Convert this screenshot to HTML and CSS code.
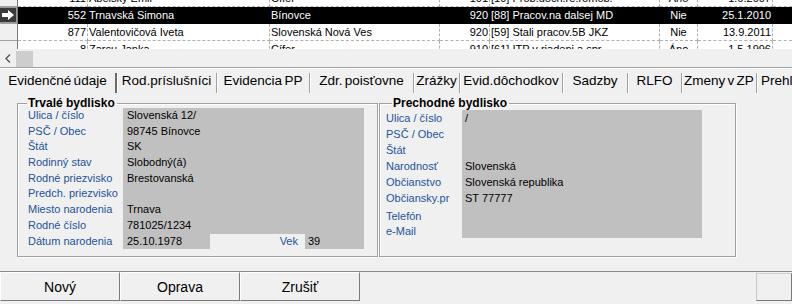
FILE: index.html
```html
<!DOCTYPE html>
<html>

<head>
  <title>Zamestnanci</title>
  <link rel="stylesheet" href="styles.css">
</head>

<body>
  <div class="grid">
    <div class="grid-rows">
      <div class="row row-cut">
        <span class="ind"></span><span class="c num">111</span><span class="c">Ábelský Emil</span><span class="c">Cífer</span><span class="c num">101</span><span class="c">[10] Prob.dôch.re.romob.</span><span class="c mid">Áno</span><span class="c num">1.6.2007</span><span class="c fill"></span>
      </div>
      <div class="row sel">
        <span class="ind on"><svg width="16" height="14" viewBox="0 0 16 14"><path d="M2 5h6V2l6 5-6 5V9H2z" fill="#fff"/></svg></span><span class="c num">552</span><span class="c">Trnavská Simona</span><span class="c">Bínovce</span><span class="c num">920</span><span class="c">[88] Pracov.na dalsej MD</span><span class="c mid">Nie</span><span class="c num">25.1.2010</span><span class="c fill"></span>
      </div>
      <div class="row">
        <span class="ind"></span><span class="c num">877</span><span class="c">Valentovičová Iveta</span><span class="c">Slovenská Nová Ves</span><span class="c num">920</span><span class="c">[59] Stali pracov.5B JKZ</span><span class="c mid">Nie</span><span class="c num">13.9.2011</span><span class="c fill"></span>
      </div>
      <div class="row">
        <span class="ind"></span><span class="c num">8</span><span class="c">Zarcu Janka</span><span class="c">Cífer</span><span class="c num">910</span><span class="c">[61] ITP v riadeni a spr.</span><span class="c mid">Áno</span><span class="c num">1.5.1996</span><span class="c fill"></span>
      </div>
    </div>
    <div class="hscroll">
      <span class="sb-btn"><svg width="6" height="9" viewBox="0 0 6 9"><polyline points="5,0.5 1,4.5 5,8.5" fill="none" stroke="#555" stroke-width="1.4"/></svg></span>
      <span class="sb-thumb"></span>
    </div>
  </div>

  <div class="tabs">
    <div class="tab active">Evidenčné údaje</div>
    <div class="tab">Rod.príslušníci</div>
    <div class="tab">Evidencia PP</div>
    <div class="tab">Zdr. poisťovne</div>
    <div class="tab">Zrážky</div>
    <div class="tab">Evid.dôchodkov</div>
    <div class="tab">Sadzby</div>
    <div class="tab">RLFO</div>
    <div class="tab">Zmeny v ZP</div>
    <div class="tab last">Prehľad</div>
  </div>

  <div class="page">
    <fieldset class="box box-left">
      <legend>Trvalé bydlisko</legend>
      <div class="fs-body">
        <div class="lbl">Ulica / číslo</div><div class="val">Slovenská 12/</div>
        <div class="lbl">PSČ / Obec</div><div class="val">98745 Bínovce</div>
        <div class="lbl">Štát</div><div class="val">SK</div>
        <div class="lbl">Rodinný stav</div><div class="val">Slobodný(á)</div>
        <div class="lbl">Rodné priezvisko</div><div class="val">Brestovanská</div>
        <div class="lbl">Predch. priezvisko</div><div class="val"></div>
        <div class="lbl">Miesto narodenia</div><div class="val">Trnava</div>
        <div class="lbl">Rodné číslo</div><div class="val">781025/1234</div>
        <div class="lbl">Dátum narodenia</div>
        <div class="val split">
          <span class="date">25.10.1978</span><span class="vek">Vek</span><span class="age">39</span>
        </div>
      </div>
    </fieldset>

    <fieldset class="box box-right">
      <legend>Prechodné bydlisko</legend>
      <div class="fs-body">
        <div class="lbl">Ulica / číslo</div><div class="val">/</div>
        <div class="lbl">PSČ / Obec</div><div class="val"></div>
        <div class="lbl">Štát</div><div class="val"></div>
        <div class="lbl">Narodnosť</div><div class="val">Slovenská</div>
        <div class="lbl">Občianstvo</div><div class="val">Slovenská republika</div>
        <div class="lbl">Občiansky.pr</div><div class="val">ST 77777</div>
        <div class="lbl tall">Telefón</div><div class="val tall"></div>
        <div class="lbl short">e-Mail</div><div class="val short"></div>
      </div>
    </fieldset>
  </div>

  <div class="buttons">
    <button>Nový</button>
    <button>Oprava</button>
    <button>Zrušiť</button>
    <button class="more"></button>
  </div>
</body>

</html>
```

FILE: styles.css
```css
body {
  margin: 0;
  width: 792px;
  height: 304px;
  overflow: hidden;
  background: #f0f0f0;
  font-family: "Liberation Sans", Arial, sans-serif;
  font-size: 11px;
  color: #000;
}

/* grid with employees */
.grid-rows {
  height: 49px;
  overflow: hidden;
  background: #fff;
}

.row {
  display: grid;
  grid-template-columns: 18px 70px 182px 170px 50px 170px 38px 75px 1fr;
  height: 17px;
}

.row-cut {
  margin-top: -10px;
}

.c {
  box-sizing: border-box;
  border-right: 1px dashed #b0b0b0;
  border-bottom: 1px dashed #b0b0b0;
  line-height: 16px;
  padding: 0 1px;
  white-space: nowrap;
  overflow: hidden;
}

.num {
  text-align: right;
}

.mid {
  text-align: center;
}

.fill {
  border-right: none;
}

.sel {
  background: #000;
  color: #fff;
}

.sel .c {
  border-color: #000;
}

.ind {
  box-sizing: border-box;
  background: #f0f0f0;
  border-right: 1px solid #7a7a7a;
  border-bottom: 1px solid #a0a0a0;
}

.ind.on {
  padding: 1px 1px 1px 0;
}

.ind.on svg {
  display: block;
  background: #3a3a3a;
  box-shadow: 0 0 0 1px #9a9a9a;
}

.hscroll {
  height: 18px;
  display: flex;
  align-items: center;
  border-bottom: 1px solid #a0a0a0;
}

.sb-btn {
  width: 16px;
  height: 17px;
  display: flex;
  align-items: center;
  justify-content: center;
}

.sb-thumb {
  width: 17px;
  height: 16px;
  margin-top: 1px;
  background: #cdcdcd;
}

/* tabs */
.tabs {
  display: grid;
  grid-template-columns: 117px 100px 93px 104px 46px 103px 65px 54px 75px 1fr;
  height: 25px;
  padding-top: 4px;
  box-sizing: border-box;
  border-top: 1px solid #fff;
}

.tab {
  box-sizing: border-box;
  font-size: 13.5px;
  word-spacing: -1.5px;
  line-height: 15px;
  text-align: center;
  white-space: nowrap;
  overflow: hidden;
  border-right: 1px solid #a0a0a0;
  box-shadow: 1px 0 0 #fff;
}

.tab.active {
  border-right: 2px solid #6a6a6a;
}

.tab.last {
  text-align: left;
  padding-left: 4px;
  border-right: none;
  box-shadow: none;
}

/* page with address boxes */
.page {
  box-sizing: border-box;
  height: 179px;
  display: flex;
  gap: 1px;
  padding: 3px 0 14px 17px;
  border-bottom: 1px solid #8a8a8a;
}

.box {
  box-sizing: border-box;
  margin: 0;
  min-width: 0;
  padding: 0 0 0 10px;
  border: 1px solid #a0a0a0;
  box-shadow: inset 1px 1px 0 #fff, 1px 1px 0 #fff;
}

.box-left {
  width: 361px;
}

.box-right {
  width: 357px;
  padding-left: 6px;
}

legend {
  font-size: 12px;
  font-weight: bold;
  line-height: 14px;
  padding: 0 2px 0 1px;
  margin-left: -1px;
}

.box-right legend {
  margin-left: 6px;
}

.fs-body {
  display: grid;
  grid-template-columns: 95px 241px;
  margin-top: -2px;
}

.box-right .fs-body {
  grid-template-columns: 76px 240px;
  margin-top: 0;
}

.lbl,
.val {
  height: 15.7px;
  line-height: 15.7px;
  white-space: nowrap;
}

.box-right .lbl,
.box-right .val {
  height: 16px;
  line-height: 16px;
}

.lbl {
  color: #24539a;
}

.val {
  background: #c0c0c0;
  padding-left: 4px;
}

.box-right .val {
  padding-left: 3px;
}

.box-right .tall {
  padding-top: 2px;
}

.box-right .short {
  height: 14px;
  line-height: 14px;
}

.split {
  display: flex;
  padding-left: 0;
}

.date {
  width: 87px;
  padding-left: 4px;
  box-sizing: border-box;
}

.vek {
  width: 95px;
  background: #f0f0f0;
  color: #24539a;
  text-align: right;
  padding-right: 7px;
  box-sizing: border-box;
}

.age {
  padding-left: 3px;
}

/* bottom buttons */
.buttons {
  display: flex;
}

button {
  width: 120px;
  height: 29px;
  margin: 0;
  padding: 0;
  background: #f0f0f0;
  border: 1px solid;
  border-color: #fff #7a7a7a #7a7a7a #fff;
  font-family: "Liberation Sans", Arial, sans-serif;
  font-size: 14px;
  color: #000;
}

button.more {
  width: 36px;
  height: 28px;
  margin: 1px 0 0 auto;
  border-color: #d0d0d0 #7a7a7a #7a7a7a #c8c8c8;
}
```
